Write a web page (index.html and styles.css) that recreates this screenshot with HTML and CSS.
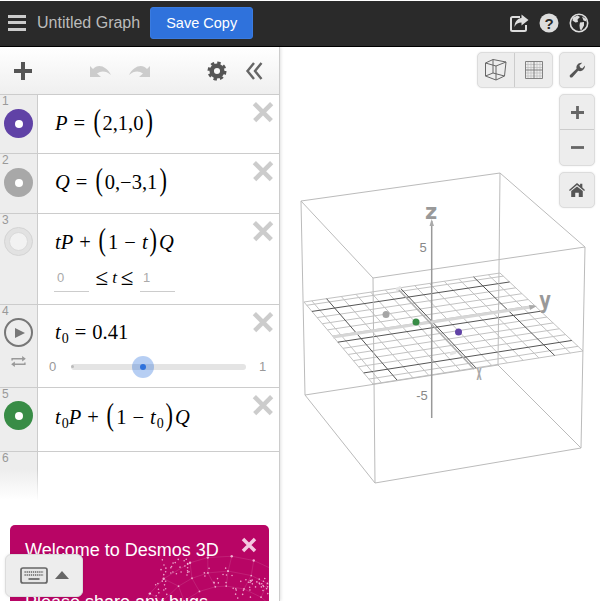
FILE: index.html
```html
<!DOCTYPE html>
<html>

<head>
    <title>Untitled Graph</title>
    <link rel="stylesheet" href="styles.css">
</head>

<body>
    <div class="app">
        <header class="topbar">
            <div class="hamburger"><span></span><span></span><span></span></div>
            <div class="graph-title">Untitled Graph</div>
            <button class="save-btn">Save Copy</button>
            <div class="top-icons">
                <svg class="top-icon" viewBox="0 0 20 20">
                    <path class="share-box" d="M11 4H3.5A1.5 1.5 0 0 0 2 5.5V16.5A1.5 1.5 0 0 0 3.5 18H15.5A1.5 1.5 0 0 0 17 16.5V12" />
                    <path class="icon-light" d="M12.5 1.5L19.5 7L12.5 12.5V9.5C9.5 9.5 7 10.500 5.5 14C5.500 9 8.500 5.300 12.500 5Z" />
                </svg>
                <svg class="top-icon" viewBox="0 0 20 20">
                    <circle class="icon-light" cx="10" cy="10" r="9.5" />
                    <text class="help-mark" x="10" y="15.5">?</text>
                </svg>
                <svg class="top-icon" viewBox="0 0 20 20">
                    <circle class="globe-ring" cx="10" cy="10" r="8.7" />
                    <path class="icon-light" d="M4 4.5L8.500 2.500L11 4L8.500 6.500L9 9L6.500 9.500L3.500 7.500ZM11 9.500L15 9L15 12.500L12.500 17L11 16.500L10.500 12.500ZM13 3.500L17 6L17.500 8.500L14.500 7.500Z" />
                </svg>
            </div>
        </header>

        <div class="main">
            <section class="panel">
                <div class="toolbar">
                    <svg class="tool tool-add" viewBox="0 0 18 18"><path class="tool-stroke" d="M9 0V18M0 9H18" /></svg>
                    <svg class="tool tool-undo" viewBox="0 0 22 14"><path class="arrow-off" d="M0 2V13H11L7 9.5C11 6.5 16 6.5 21 11C17 2.5 8 -1 3 5Z" /></svg>
                    <svg class="tool tool-redo" viewBox="0 0 22 14"><path class="arrow-off" d="M22 2V13H11L15 9.5C11 6.5 6 6.5 1 11C5 2.5 14 -1 19 5Z" /></svg>
                    <svg class="tool tool-gear" viewBox="0 0 20 20">
                        <circle class="gear-body" cx="10" cy="10" r="5.3" />
                        <circle class="gear-teeth" cx="10" cy="10" r="8.2" />
                    </svg>
                    <svg class="tool tool-hide" viewBox="0 0 18 18"><path class="chevrons" d="M9 1L2.5 9L9 17M16.5 1L10 9L16.5 17" /></svg>
                </div>

                <div class="expr-list">
                    <div class="row row-1">
                        <div class="gutter">
                            <div class="num">1</div>
                            <div class="dot-icon purple"><span></span></div>
                        </div>
                        <div class="math"><i>P</i><span class="op">=</span><span class="paren">(</span><span>2,1,0</span><span class="paren">)</span></div>
                        <div class="close"></div>
                    </div>

                    <div class="row row-2">
                        <div class="gutter">
                            <div class="num">2</div>
                            <div class="dot-icon gray"><span></span></div>
                        </div>
                        <div class="math"><i>Q</i><span class="op">=</span><span class="paren">(</span><span>0,−3,1</span><span class="paren">)</span></div>
                        <div class="close"></div>
                    </div>

                    <div class="row row-3">
                        <div class="gutter">
                            <div class="num">3</div>
                            <div class="dot-icon pale"><span></span></div>
                        </div>
                        <div class="body">
                            <div class="math"><i>tP</i><span class="op">+</span><span class="paren">(</span><span>1</span><span class="op">−</span><i>t</i><span class="paren">)</span><i>Q</i></div>
                            <div class="domain">
                                <div class="limit">0</div>
                                <div class="domain-text"><span class="leq">≤</span><i>t</i><span class="leq">≤</span></div>
                                <div class="limit">1</div>
                            </div>
                        </div>
                        <div class="close"></div>
                    </div>

                    <div class="row row-4">
                        <div class="gutter">
                            <div class="num">4</div>
                            <div class="play-icon"><span></span></div>
                            <svg class="repeat-icon" viewBox="0 0 16 12">
                                <path class="repeat-line" d="M1 5V3H13M15 7V9H3" />
                                <path class="repeat-head" d="M12 0L16 3L12 6ZM4 6L0 9L4 12Z" />
                            </svg>
                        </div>
                        <div class="body">
                            <div class="math"><i>t</i><sub>0</sub><span class="op">=</span><span>0.41</span></div>
                            <div class="slider">
                                <span class="slider-end">0</span>
                                <div class="track">
                                    <div class="handle"><span></span></div>
                                </div>
                                <span class="slider-end">1</span>
                            </div>
                        </div>
                        <div class="close"></div>
                    </div>

                    <div class="row row-5">
                        <div class="gutter">
                            <div class="num">5</div>
                            <div class="dot-icon green"><span></span></div>
                        </div>
                        <div class="math"><i>t</i><sub>0</sub><i>P</i><span class="op">+</span><span class="paren">(</span><span>1</span><span class="op">−</span><i>t</i><sub>0</sub><span class="paren">)</span><i>Q</i></div>
                        <div class="close"></div>
                    </div>

                    <div class="row row-6">
                        <div class="gutter">
                            <div class="num">6</div>
                        </div>
                    </div>
                </div>

                <div class="banner">
                    <svg class="banner-art" id="bannerArt" viewBox="0 0 259 76"></svg>
                    <div class="banner-title">Welcome to Desmos 3D</div>
                    <div class="banner-text">Please share any bugs</div>
                    <svg class="banner-close" viewBox="0 0 16 16"><path d="M2 2L14 14M14 2L2 14" /></svg>
                </div>

                <div class="keyboard-btn">
                    <svg class="kb-icon" viewBox="0 0 28 17">
                        <rect class="kb-frame" x="1" y="1" width="26" height="15" rx="2" />
                        <path class="kb-keys" d="M4.5 5H23.5M4.5 8H23.5" />
                        <path class="kb-space" d="M8.5 12H19.5" />
                    </svg>
                    <span class="kb-arrow"></span>
                </div>
            </section>

            <section class="graph">
                <svg class="scene" id="scene" viewBox="280 47 320 554">
                    <g id="grid"></g>
                    <path class="box" d="M301 201L500 173L585 247L373 278ZM305 395L498 365L581 448L375 483ZM301 201L305 395M500 173L498 365M585 247L581 448M373 278L375 483" />
                    <path class="axis-z" d="M431.7 221V418" />
                    <path class="axis-tip" d="M431.7 219L429.5 226H434Z" />
                    <path class="axis-y" d="M333 337L531 307" />
                    <path class="axis-tip" d="M537 306L529 305L530 310Z" />
                    <path class="axis-x" d="M398 289L474 369" />
                    <path class="smudge" d="M396 290L401 287M450 354L456 352" />
                    <text class="axis-letter" x="431" y="219">z</text>
                    <text class="axis-letter" transform="translate(545 308) scale(.85 1.1)">y</text>
                    <text class="axis-letter axis-x-letter" transform="translate(479 380) scale(.38 1)">x</text>
                    <text class="tick-label" x="423" y="252">5</text>
                    <text class="tick-label" x="422" y="400">-5</text>
                    <circle class="pt-gray" cx="386" cy="314.5" r="3.5" />
                    <circle class="pt-green" cx="416" cy="322" r="3.5" />
                    <circle class="pt-purple" cx="458.5" cy="332" r="3.5" />
                </svg>

                <div class="controls">
                    <div class="ctl-column">
                        <div class="ctl-pair">
                            <div class="ctl ctl-split">
                                <svg class="ctl-icon" viewBox="0 0 22 22">
                                    <path class="cube" d="M.5 4L8 .5L21 3L19.5 17L11 21L.5 17ZM.5 4L11 7L21 3M11 7V21M8 .5V14M8 14L.5 17M8 14L19.5 17" />
                                </svg>
                            </div>
                            <div class="ctl">
                                <svg class="ctl-icon" viewBox="0 0 18 18">
                                    <path class="grid-thin" d="M.5 3.5H17.5M.5 6.5H17.5M.5 12H17.5M.5 15H17.5M3 .5V17.5M6 .5V17.5M12 .5V17.5M15 .5V17.5" />
                                    <path class="grid-main" d="M.5 .5H17.5V17.5H.5ZM9 .5V17.5M.5 9H17.5" />
                                </svg>
                            </div>
                        </div>
                        <div class="ctl ctl-solo">
                            <svg class="ctl-icon" viewBox="0 0 20 20">
                                <path class="wrench" d="M3 19.5C1.5 19.5 .5 18 1 16.5L9.5 8.5C8.5 4.5 11.5 .5 16.5 1L13 4.5L14 7L16.5 8L20 4.5C20 10 15.5 12.5 11.5 11L4.5 18.8C4 19.3 3.5 19.5 3 19.5Z" />
                            </svg>
                        </div>
                    </div>
                    <div class="ctl-stack">
                        <div class="ctl ctl-split-h">
                            <svg class="ctl-icon" viewBox="0 0 14 14"><path class="ctl-stroke" d="M7 0V14M0 7H14" /></svg>
                        </div>
                        <div class="ctl">
                            <svg class="ctl-icon" viewBox="0 0 14 14"><path class="ctl-stroke" d="M0 7H14" /></svg>
                        </div>
                    </div>
                    <div class="ctl ctl-solo">
                        <svg class="ctl-icon" viewBox="0 0 18 16">
                            <path class="ctl-fill" d="M9 0L12.5 3V1H15V5.2L18 8L17 9L9 2.5L1 9L0 8ZM9 4L15.5 9.2V16H11V11H7V16H2.5V9.2Z" />
                        </svg>
                    </div>
                </div>
            </section>
        </div>
    </div>

    <script src="graph.js"></script>
</body>

</html>
```

FILE: styles.css
```css
* {
    box-sizing: border-box;
}

body {
    margin: 0;
    font-family: "Liberation Sans", Arial, sans-serif;
    background-color: #fff;
    overflow: hidden;
}

svg {
    display: block;
}

.app {
    height: 601px;
    display: flex;
    flex-direction: column;
    overflow: hidden;
}

/* top bar */
.topbar {
    height: 47px;
    flex: none;
    display: flex;
    align-items: center;
    padding: 0 11px 2px 8px;
    background-color: #2a2a2a;
    border-top: 1px solid #fff;
    border-bottom: 1px solid #000;
}

.hamburger {
    width: 18px;
    height: 16px;
    display: flex;
    flex-direction: column;
    justify-content: space-between;
}

.hamburger span {
    height: 3px;
    background-color: #ccc;
}

.graph-title {
    margin-left: 11px;
    font-size: 16px;
    color: #bbb;
}

.save-btn {
    width: 103px;
    height: 32px;
    margin-left: 10px;
    font-family: inherit;
    font-size: 14.5px;
    color: #fff;
    background-color: #2f72dc;
    border: 1px solid #3a7be0;
    border-radius: 3px;
}

.top-icons {
    margin-left: auto;
    display: flex;
    gap: 10px;
}

.top-icon {
    width: 20px;
    height: 20px;
}

.share-box {
    fill: none;
    stroke: #ddd;
    stroke-width: 2;
}

.icon-light {
    fill: #ddd;
}

.help-mark {
    font-size: 15px;
    font-weight: bold;
    text-anchor: middle;
    fill: #2a2a2a;
}

.globe-ring {
    fill: none;
    stroke: #ddd;
    stroke-width: 1.6;
}

.main {
    flex: 1;
    display: flex;
    min-height: 0;
}

/* left panel */
.panel {
    width: 280px;
    flex: none;
    position: relative;
    display: flex;
    flex-direction: column;
    background-color: #fff;
    border-right: 1px solid #ccc;
    box-shadow: 1px 0 3px rgba(0, 0, 0, 0.12);
    z-index: 1;
}

.toolbar {
    height: 48px;
    flex: none;
    display: flex;
    align-items: center;
    background: linear-gradient(#fff, #efefef);
    border-bottom: 1px solid #ccc;
}

.tool {
    flex: none;
}

.tool-add {
    width: 18px;
    height: 18px;
    margin-left: 14px;
}

.tool-stroke {
    fill: none;
    stroke: #555;
    stroke-width: 4;
}

.tool-undo,
.tool-redo {
    width: 22px;
    height: 14px;
}

.tool-undo {
    margin-left: 58px;
}

.tool-redo {
    margin-left: 16px;
}

.arrow-off {
    fill: #ccc;
}

.tool-gear {
    width: 20px;
    height: 20px;
    margin-left: 57px;
}

.gear-body {
    fill: none;
    stroke: #555;
    stroke-width: 4.5;
}

.gear-teeth {
    fill: none;
    stroke: #555;
    stroke-width: 2.6;
    stroke-dasharray: 3.44 3;
}

.tool-hide {
    width: 18px;
    height: 18px;
    margin-left: 18px;
}

.chevrons {
    fill: none;
    stroke: #666;
    stroke-width: 2.4;
}

.expr-list {
    flex: none;
}

.row {
    position: relative;
    display: flex;
    border-bottom: 1px solid #ccc;
}

.row-1 {
    height: 59px;
}

.row-2 {
    height: 60px;
}

.row-3 {
    height: 91px;
}

.row-4 {
    height: 83px;
}

.row-5 {
    height: 64px;
}

.row-6 {
    height: 48px;
    border-bottom: none;
}

.gutter {
    width: 38px;
    flex: none;
    padding-left: 4px;
    background-color: #ededed;
    border-right: 1px solid #ccc;
}

.row-6 .gutter {
    background: linear-gradient(#ededed 35%, #fff);
    border-right: 1px solid;
    border-image: linear-gradient(#ccc 35%, #fff) 1;
}

.num {
    height: 14px;
    margin-left: -2px;
    font-size: 12px;
    line-height: 13px;
    color: #999;
}

.row-3 .num,
.row-4 .num,
.row-5 .num {
    height: 13px;
}

.dot-icon {
    width: 29px;
    height: 29px;
    display: flex;
    align-items: center;
    justify-content: center;
    border-radius: 50%;
}

.dot-icon span {
    width: 8px;
    height: 8px;
    border-radius: 50%;
    background-color: #fff;
}

.purple {
    background-color: #6042a6;
}

.gray {
    background-color: #a8a8a8;
}

.green {
    background-color: #388c46;
}

.pale {
    background-color: #e2e2e2;
    border: 1px solid #d4d4d4;
}

.pale span {
    width: 19px;
    height: 19px;
    background-color: #f2f2f2;
    border: 1px solid #dadada;
}

.play-icon {
    width: 29px;
    height: 29px;
    display: flex;
    align-items: center;
    justify-content: center;
    border: 2px solid #777;
    border-radius: 50%;
}

.play-icon span {
    width: 0;
    height: 0;
    margin-left: 3px;
    border-left: 10px solid #777;
    border-top: 5.5px solid transparent;
    border-bottom: 5.5px solid transparent;
}

.repeat-icon {
    width: 15px;
    height: 11px;
    margin: 9px 0 0 7px;
}

.repeat-line {
    fill: none;
    stroke: #999;
    stroke-width: 1.5;
}

.repeat-head {
    fill: #999;
}

.close {
    position: absolute;
    top: 5px;
    right: 4px;
    width: 24px;
    height: 24px;
    background:
        linear-gradient(#ccc, #ccc) center / 24px 4.5px no-repeat,
        linear-gradient(#ccc, #ccc) center / 4.5px 24px no-repeat;
    transform: rotate(45deg);
}

.math {
    display: flex;
    align-items: center;
    height: 30px;
    margin: 13px 0 0 17px;
    font-family: "Liberation Serif", "Times New Roman", serif;
    font-size: 20.5px;
    color: #000;
    white-space: nowrap;
}

.row-5 .math {
    margin-top: 14px;
}

.row-4 .math {
    margin-top: 12px;
}

.op {
    margin: 0 6px;
}

.paren {
    margin: 0 .5px;
    font-size: 31px;
    line-height: 30px;
    transform: translateY(-2px) scaleX(.72);
}

sub {
    margin: 12px 0 0 1px;
    font-size: 14px;
    line-height: 15px;
}

.body {
    flex: 1;
    min-width: 0;
}

.domain {
    display: flex;
    align-items: center;
    margin: 12px 0 0 16px;
}

.limit {
    width: 35px;
    height: 23px;
    padding: 1px 0 0 3px;
    font-size: 13px;
    color: #aaa;
    border-bottom: 1px solid #ccc;
}

.domain-text {
    width: 51px;
    display: flex;
    justify-content: center;
    align-items: center;
    gap: 4px;
    margin-top: -5px;
    font-family: "Liberation Serif", "Times New Roman", serif;
    font-size: 17px;
}

.leq {
    font-size: 23px;
    line-height: 22px;
}

.slider {
    display: flex;
    align-items: center;
    margin: 12px 0 0 11px;
}

.slider-end {
    width: 10px;
    font-size: 13px;
    color: #999;
}

.track {
    position: relative;
    width: 175px;
    height: 6px;
    margin: 0 13px 0 12px;
    background-color: #e4e4e4;
    border-radius: 3px;
}

.track::before {
    content: "";
    position: absolute;
    left: 0;
    top: 1.5px;
    width: 3px;
    height: 3px;
    background-color: #bbb;
    border-radius: 50%;
}

.handle {
    position: absolute;
    left: 61px;
    top: -8px;
    width: 22px;
    height: 22px;
    display: flex;
    align-items: center;
    justify-content: center;
    background-color: rgba(47, 114, 220, 0.35);
    border-radius: 50%;
}

.handle span {
    width: 6px;
    height: 6px;
    background-color: #2f72dc;
    border-radius: 50%;
}

/* welcome note */
.banner {
    position: relative;
    flex: none;
    height: 76px;
    margin: auto 10px 0 10px;
    overflow: hidden;
    color: #fff;
    background-color: #b80565;
    border-radius: 5px 5px 0 0;
}

.banner-art {
    position: absolute;
    left: 0;
    top: 0;
    width: 259px;
    height: 76px;
}

.banner-title {
    position: relative;
    margin: 15px 0 0 15px;
    font-size: 18px;
    line-height: 21px;
}

.banner-text {
    position: relative;
    margin: 31px 0 0 15px;
    font-size: 18px;
    line-height: 21px;
}

.banner-close {
    position: absolute;
    top: 12px;
    right: 12px;
    width: 16px;
    height: 16px;
    fill: none;
    stroke: #f3c9e0;
    stroke-width: 3.5;
}

.art-line {
    stroke: rgba(255, 255, 255, 0.16);
    stroke-width: 0.7;
    fill: none;
}

.art-dot {
    fill: rgba(255, 220, 238, 0.75);
}

.keyboard-btn {
    position: absolute;
    left: 5px;
    top: 507px;
    width: 78px;
    height: 43px;
    display: flex;
    align-items: center;
    gap: 7px;
    padding: 0 0 1px 14px;
    background-color: #ededed;
    border: 1px solid #dcdcdc;
    border-radius: 6px;
    box-shadow: 0 0 3px rgba(0, 0, 0, 0.1);
}

.kb-icon {
    width: 28px;
    height: 17px;
}

.kb-frame {
    fill: #e6e6e6;
    stroke: #666;
    stroke-width: 1.7;
}

.kb-keys {
    fill: none;
    stroke: #666;
    stroke-width: 1.5;
    stroke-dasharray: 1.3 .8;
}

.kb-space {
    fill: none;
    stroke: #666;
    stroke-width: 1.7;
}

.kb-arrow {
    width: 0;
    height: 0;
    border-left: 7px solid transparent;
    border-right: 7px solid transparent;
    border-bottom: 8px solid #666;
}

/* graph paper */
.graph {
    flex: 1;
    position: relative;
    min-width: 0;
}

.scene {
    position: absolute;
    left: 0;
    top: 0;
    width: 320px;
    height: 554px;
}

.box {
    fill: none;
    stroke: #bbb;
    stroke-width: 1;
}

.grid-minor {
    stroke: #c2c2c2;
    stroke-width: 1;
}

.grid-major {
    stroke: #555;
    stroke-width: 1;
}

.axis-z {
    stroke: #999;
    stroke-width: 1.5;
}

.axis-y {
    stroke: #d6d6d6;
    stroke-width: 3;
}

.axis-x {
    stroke: #b0b0b0;
    stroke-width: 1.6;
}

.axis-tip {
    fill: #aaa;
}

.smudge {
    stroke: #e4e4e4;
    stroke-width: 3;
}

.axis-letter {
    font-family: "DejaVu Sans", sans-serif;
    font-size: 21px;
    font-weight: bold;
    text-anchor: middle;
    fill: #999;
}

.axis-x-letter {
    fill: #aaa;
}

.tick-label {
    font-size: 13px;
    text-anchor: middle;
    fill: #888;
}

.pt-gray {
    fill: #a5a5a5;
}

.pt-green {
    fill: #388c46;
}

.pt-purple {
    fill: #6042a6;
}

/* buttons over the graph */
.controls {
    position: absolute;
    top: 5px;
    right: 5px;
    display: flex;
    flex-direction: column;
    align-items: flex-end;
    gap: 6px;
}

.ctl-column {
    display: flex;
    gap: 6px;
}

.ctl-pair {
    display: flex;
    background-color: #ededed;
    border: 1px solid #dcdcdc;
    border-radius: 5px;
    box-shadow: 0 0 2px rgba(0, 0, 0, 0.1);
}

.ctl-stack {
    width: 36px;
    background-color: #ededed;
    border: 1px solid #dcdcdc;
    border-radius: 5px;
    box-shadow: 0 0 2px rgba(0, 0, 0, 0.1);
}

.ctl {
    width: 37px;
    height: 34px;
    display: flex;
    align-items: center;
    justify-content: center;
}

.ctl-stack .ctl {
    width: 34px;
    height: 35px;
}

.ctl-split {
    border-right: 1px solid #ccc;
}

.ctl-split-h {
    border-bottom: 1px solid #ccc;
}

.ctl-solo {
    width: 36px;
    height: 36px;
    background-color: #ededed;
    border: 1px solid #dcdcdc;
    border-radius: 5px;
    box-shadow: 0 0 2px rgba(0, 0, 0, 0.1);
}

.ctl-icon {
    width: 18px;
    height: 18px;
}

.ctl-solo .ctl-icon {
    width: 16px;
    height: 16px;
}

.ctl-split .ctl-icon {
    width: 22px;
    height: 22px;
}

.ctl-stack .ctl-icon {
    width: 13px;
    height: 13px;
}

.cube {
    fill: none;
    stroke: #666;
    stroke-width: 1;
}

.grid-thin {
    fill: none;
    stroke: #bbb;
    stroke-width: 0.7;
}

.grid-main {
    fill: none;
    stroke: #777;
    stroke-width: 0.9;
}

.wrench {
    fill: #555;
}

.ctl-stroke {
    fill: none;
    stroke: #666;
    stroke-width: 3;
}

.ctl-fill {
    fill: #555;
}
```

FILE: graph.js
```js
const NS = "http://www.w3.org/2000/svg"

// corners of the z=0 plane, in page coordinates
const L = [304, 302]
const B = [500, 273]
const R = [583, 351]
const F = [373, 384]

function lerp(a, b, t) {
    return [a[0] + (b[0] - a[0]) * t, a[1] + (b[1] - a[1]) * t]
}

function addLine(parent, a, b, cls) {
    const line = document.createElementNS(NS, "line")
    line.setAttribute("x1", a[0])
    line.setAttribute("y1", a[1])
    line.setAttribute("x2", b[0])
    line.setAttribute("y2", b[1])
    line.setAttribute("class", cls)
    parent.appendChild(line)
}

function addDot(parent, p, r) {
    const dot = document.createElementNS(NS, "circle")
    dot.setAttribute("cx", p[0])
    dot.setAttribute("cy", p[1])
    dot.setAttribute("r", r)
    dot.setAttribute("class", "art-dot")
    parent.appendChild(dot)
}

function drawGrid() {
    const grid = document.getElementById("grid")
    const minor = [0, 1]
    for (let k = -6; k <= 6; k++) {
        if (k % 5 !== 0) minor.push(0.49 + k * 0.075)
    }
    minor.forEach(t => {
        addLine(grid, lerp(L, B, t), lerp(F, R, t), "grid-minor")
        addLine(grid, lerp(L, F, t), lerp(B, R, t), "grid-minor")
    })
    // majors go on top
    ;[0.115, 0.49, 0.865].forEach(t => {
        addLine(grid, lerp(L, B, t), lerp(F, R, t), "grid-major")
        addLine(grid, lerp(L, F, t), lerp(B, R, t), "grid-major")
    })
}

// dotted globe in the welcome note
function drawBannerArt() {
    const art = document.getElementById("bannerArt")
    let seed = 11
    function rand() {
        seed = (seed * 16807) % 2147483647
        return seed / 2147483647
    }
    const cx = 215, cy = 125, r = 94

    // rings of the globe, joined along the ring and to the ring below
    const rings = [1, 0.84, 0.68]
    const nodes = rings.map(k => {
        const ring = []
        for (let a = 190; a <= 350; a += 14) {
            const rad = (a + (rand() - 0.5) * 6) * Math.PI / 180
            ring.push([cx + Math.cos(rad) * r * k, cy + Math.sin(rad) * r * k])
        }
        return ring
    })
    nodes.forEach((ring, i) => {
        ring.forEach((p, j) => {
            if (j > 0) addLine(art, ring[j - 1], p, "art-line")
            if (i > 0) addLine(art, nodes[i - 1][j], p, "art-line")
            addDot(art, p, i === 0 ? 1.2 : 0.9)
        })
    })

    // denser patches of small dots
    const clusters = [
        [165, 42, 14, 8, 26],
        [240, 62, 18, 12, 34],
        [150, 64, 10, 8, 12],
        [205, 50, 16, 8, 12]
    ]
    clusters.forEach(c => {
        for (let i = 0; i < c[4]; i++) {
            addDot(art, [c[0] + (rand() - 0.5) * c[2] * 2, c[1] + (rand() - 0.5) * c[3] * 2], 0.8)
        }
    })
}

drawGrid()
drawBannerArt()
```
